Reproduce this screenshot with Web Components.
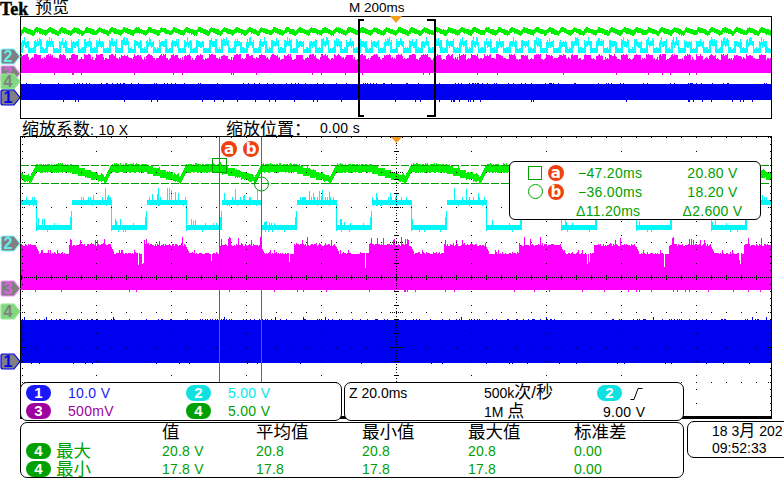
<!DOCTYPE html>
<html lang="zh">
<head>
<meta charset="utf-8">
<title>Tek</title>
<style>
  html, body { margin: 0; padding: 0; background: #fff; overflow: hidden; }
</style>
</head>
<body>
<scope-screen>
  <scope-top style="grid-area: 1 / 1 / 2 / -1"></scope-top>
  <scope-overview style="grid-area: 2 / 2 / 3 / 7"></scope-overview>
  <scope-zoombar style="grid-area: 3 / 2 / 4 / -1"></scope-zoombar>
  <scope-main style="grid-area: 4 / 2 / 6 / 7">
    <scope-badge style="left:201px;top:5px">a</scope-badge>
    <scope-badge style="left:223px;top:5px">b</scope-badge>
    <cursor-readout></cursor-readout>
  </scope-main>
  <scope-rail style="grid-area: 1 / 1 / -1 / 2">
    <scope-tag ch="2" style="top:48px"></scope-tag>
    <scope-tag ch="3" style="top:65px"></scope-tag>
    <scope-tag ch="4" style="top:73px"></scope-tag>
    <scope-tag ch="1" style="top:89px"></scope-tag>
    <scope-tag ch="2" style="top:235px"></scope-tag>
    <scope-tag ch="3" style="top:280px"></scope-tag>
    <scope-tag ch="4" style="top:303px"></scope-tag>
    <scope-tag ch="1" style="top:353px"></scope-tag>
  </scope-rail>
  <channel-box style="grid-area: 5 / 2 / 7 / 3">
    <scope-pill ch="1">1</scope-pill><scope-value ch="1">10.0 V</scope-value>
    <scope-pill ch="2">2</scope-pill><scope-value ch="2">5.00 V</scope-value>
    <scope-pill ch="3">3</scope-pill><scope-value ch="3">500mV</scope-value>
    <scope-pill ch="4">4</scope-pill><scope-value ch="4">5.00 V</scope-value>
  </channel-box>
  <acq-box style="grid-area: 5 / 4 / 7 / 5"></acq-box>
  <meas-box style="grid-area: 8 / 2 / 10 / 5"></meas-box>
  <date-box style="grid-area: 7 / 6 / 9 / -1"></date-box>
</scope-screen>

<script>
const SANS = '"Liberation Sans", "Noto Sans CJK SC", sans-serif';
const GREEN = '#00a000';

// small repeatable random so the noise is the same on every load
function makeRand(seed) {
  let s = seed;
  return () => {
    s = (s * 1664525 + 1013904223) % 4294967296;
    return s / 4294967296;
  };
}

// one vertical run per pixel column, fn(x) gives [top, bottom]
function columns(x0, x1, fn) {
  let d = '';
  for (let x = x0; x < x1; x++) {
    const [a, b] = fn(x);
    d += `M${x + 0.5} ${Math.round(a)}V${Math.round(b)}`;
  }
  return d;
}

function trace(d, color) {
  return `<path d="${d}" stroke="${color}" fill="none" stroke-width="1" shape-rendering="crispEdges"/>`;
}

class ScopeScreen extends HTMLElement {
  constructor() {
    super();
    this.attachShadow({mode: 'open'}).innerHTML = `
      <style>
        :host {
          display: grid;
          width: 784px;
          height: 480px;
          overflow: hidden;
          background: #fff;
          color: #000;
          font-family: ${SANS};
          grid-template-columns: 20px 322px 2px 340px 3px 85px 12px;
          grid-template-rows: 16px 103px 17px 246px 37px 2px 1px 36px 20px 2px;
        }
      </style>
      <slot></slot>`;
  }
}

class ScopeTop extends HTMLElement {
  constructor() {
    super();
    this.attachShadow({mode: 'open'}).innerHTML = `
      <style>
        :host { display: block; position: relative; height: 16px; line-height: 16px; white-space: nowrap; }
        .row { display: flex; align-items: center; height: 16px; }
        .tek { font: bold 18px/16px "Liberation Serif", serif; width: 35px; padding-top: 1px; -webkit-text-stroke: 0.4px #000; }
        .title { font-size: 17px; width: 314px; }
        .scale { font-size: 13.5px; }
      </style>
      <div class="row">
        <span class="tek">Tek</span>
        <span class="title">预览</span>
        <span class="scale">M 200ms</span>
      </div>`;
  }
}

class ScopeZoombar extends HTMLElement {
  constructor() {
    super();
    this.attachShadow({mode: 'open'}).innerHTML = `
      <style>
        :host { display: flex; align-items: center; height: 17px; padding-left: 2px; white-space: nowrap; font-size: 17px; }
        .factor { width: 204px; }
        .pos { width: 94px; }
        small { font-size: 14px; letter-spacing: 0.3px; }
      </style>
      <span class="factor">缩放系数<small>: 10 X</small></span>
      <span class="pos">缩放位置：</span>
      <small>0.00 s</small>`;
  }
}

class ScopeOverview extends HTMLElement {
  constructor() {
    super();
    const rand = makeRand(7);
    const period = 12.5;
    const green = columns(21, 771, x => {
      const p = ((x - 21) % period) / period;
      const c = p < 0.2 ? 32 - p * 15 : 29 + (p - 0.2) * 5;
      return [c - 2.5 + rand() * 0.8, c + 2.5 + rand() * 1.2];
    });
    const cyan = columns(21, 771, x => {
      const p = ((x - 21) % period) / period;
      const n = rand();
      if (p < 0.16 || (p > 0.5 && p < 0.64)) return [39 + n * 3, 53];
      if (p < 0.5) return [n < 0.3 ? 37 + n * 6 : 40 + n * 2, 45 + n * 3];
      return [47 + n * 2, 53];
    });
    const magenta = columns(21, 771, x => {
      const p = ((x - 21) % period) / period;
      const n = rand();
      const top = p < 0.55 ? 54 + n * 2 : 57 + n * 3;
      return [top, n < 0.03 ? 75 : 73];
    });
    const blue = columns(21, 771, x => {
      const n = rand();
      const m = rand();
      return [n < 0.15 ? 83 : 84, m < 0.07 ? 102 : 100];
    });
    this.attachShadow({mode: 'open'}).innerHTML = `
      <style>
        :host { display: block; height: 103px; position: relative; }
        svg { display: block; overflow: visible; }
      </style>
      <svg width="752" height="103" viewBox="20 16 752 103">
        <rect x="20.5" y="16.5" width="751" height="102" fill="#fff" stroke="#000"/>
        ${trace(green, '#00f000')}
        ${trace(cyan, '#00ffff')}
        ${trace(magenta, '#ff00ff')}
        ${trace(blue, '#0000f0')}
        <path d="M364 20H359V116H364M427 20H435V116H427" fill="none" stroke="#000" stroke-width="2" shape-rendering="crispEdges"/>
        <path d="M390 16H402L396 23Z" fill="#f59a23"/>
      </svg>`;
  }
}

class ScopeMain extends HTMLElement {
  constructor() {
    super();
    this.attachShadow({mode: 'open'}).innerHTML = `
      <style>
        :host { display: block; position: relative; height: 283px; }
        svg { display: block; position: absolute; left: 0; top: 0; }
      </style>
      <svg width="752" height="283" viewBox="20 136 752 283">${this.drawing()}</svg>
      <slot></slot>`;
  }

  drawing() {
    const rand = makeRand(21);
    const period = 75;
    const phase = (x, start) => ((x - start) % period + period) % period;

    const green = columns(21, 771, x => {
      const p = phase(x, 30);
      let c, half;
      if (p < 6) { c = 180 - p * 2; half = 3.5; }
      else if (p < 40) { c = 168.5; half = 3.6; }
      else { c = 168.5 + (p - 40) / 35 * 11; half = 3.8 - (p - 40) / 35 * 0.8; }
      c = p >= 40 ? Math.round(c / 2) * 2 : c;
      const n = rand();
      return [c - half - (n < 0.1 ? 2 : n * 0.8), c + half + rand() * 0.8];
    });

    const cyan = columns(21, 771, x => {
      const p = phase(x, 36);
      const n = rand();
      if (p < 1) return [200, 231];
      if (p < 34) {
        const spike = p < 10 && n < 0.2 ? 3 + n * 18 : n < 0.06 ? 2 : 0;
        return [225 - spike, 230 + (rand() < 0.1 ? 2 : 0)];
      }
      if (p < 36) return [205 + (36 - p) * 6, 230];
      let top = 200;
      if (n < 0.14) top = 187 + n * 70;
      else if (n < 0.3) top = 197;
      return [top, 205 + (rand() < 0.1 ? 1 : 0)];
    });

    const magenta = columns(21, 771, x => {
      const p = phase(x, 36);
      const n = rand();
      const m = rand();
      let top;
      if (p >= 33) top = n < 0.12 ? 237 + n * 30 : 243 + n * 3;
      else if (p < 3) top = 247 + p * 2;
      else if (p > 24 && n < 0.15) top = 258 + n * 70;
      else top = n < 0.1 ? 250 : 252 + n * 2.5;
      return [top, m < 0.04 ? 292 : 290];
    });

    const blue = columns(21, 771, x => {
      const n = rand();
      const m = rand();
      return [n < 0.02 ? 317 : n < 0.2 ? 319 : 320, m < 0.03 ? 364 : 363];
    });

    // graticule
    let dots = '';
    const dot = (x, y) => { dots += `M${x} ${y}h1v1h-1z`; };
    for (let k = 0; k <= 10; k++) {
      const x = 21 + k * 75;
      if (k === 0 || k === 5 || k === 10) continue;
      for (let y = 137; y < 416; y += 14) dot(x, y);
    }
    for (let r = 0; r <= 8; r++) {
      const y = 137 + r * 35;
      if (r === 4) continue;
      for (let x = 36; x < 770; x += 15) dot(x, y);
      for (let x = 390; x <= 403; x += 2) dot(x, y);
      dot(24, y);
      dot(768, y);
    }
    for (let y = 137; y < 416; y += 7) { dot(22, y); dot(770, y); }
    for (let x = 22; x < 770; x += 2) dot(x, 277);
    for (let x = 21; x < 771; x += 15) {
      for (let y = 275; y <= 279; y++) dot(x, y);
    }
    for (let i = 0; i < 100; i++) dot(396, Math.round(137 + i * 2.8));
    for (let y = 137; y < 416; y += 14) {
      dot(394, y); dot(395, y); dot(397, y); dot(398, y);
    }

    return `
      <rect x="20" y="136" width="752" height="283" fill="#fff"/>
      ${trace(green, '#00f000')}
      ${trace(cyan, '#00f8f8')}
      ${trace(magenta, '#ff00ff')}
      ${trace(blue, '#0000f0')}
      <path d="${dots}" fill="#000" shape-rendering="crispEdges"/>
      <path d="M21 165.5H771M21 183.5H771" stroke="#00a000" stroke-dasharray="8 2" fill="none" shape-rendering="crispEdges"/>
      <path d="M219.5 136V416M261.5 136V416" stroke="#1a9a1a" fill="none" shape-rendering="crispEdges"/>
      <rect x="212.5" y="158.5" width="14" height="14" fill="none" stroke="#00a000"/>
      <circle cx="261.5" cy="184" r="7" fill="none" stroke="#00a000"/>
      <path d="M20.5 136V419M20 136.5H772M771.5 136V419" stroke="#000" fill="none" shape-rendering="crispEdges"/>
      <rect x="20" y="416" width="752" height="3" fill="#000"/>
      <path d="M391 137H402L396.5 143Z" fill="#f59a23"/>`;
  }
}

class ScopeRail extends HTMLElement {
  constructor() {
    super();
    this.attachShadow({mode: 'open'}).innerHTML = `
      <style>:host { display: block; position: relative; width: 20px; z-index: 2; }</style>
      <slot></slot>`;
  }
}

const TAG_COLORS = {
  1: {fill: '#808080', line: '#0000f0', text: '#0000f0'},
  2: {fill: '#808080', line: '#80ffff', text: '#60f0f0'},
  3: {fill: '#808080', line: '#ff90ff', text: '#e060e0'},
  4: {fill: '#80d880', line: '#90e890', text: '#808080'},
};

class ScopeTag extends HTMLElement {
  constructor() {
    super();
    const ch = this.getAttribute('ch');
    const c = TAG_COLORS[ch];
    this.attachShadow({mode: 'open'}).innerHTML = `
      <style>
        :host { display: block; position: absolute; left: 0; width: 21px; height: 17px; }
        svg { display: block; }
        span {
          position: absolute; left: 1px; top: 0; width: 14px; height: 17px;
          text-align: center; font: bold 16px/17px "Liberation Sans", sans-serif; color: ${c.text};
        }
      </style>
      <svg width="21" height="17"><polygon points="2,1 14,1 20,8.5 14,16 2,16 1,15 1,2" fill="${c.fill}" stroke="${c.line}" stroke-width="1.2"/></svg>
      <span>${ch}</span>`;
  }
}

class ScopeBadge extends HTMLElement {
  constructor() {
    super();
    this.attachShadow({mode: 'open'}).innerHTML = `
      <style>
        :host {
          display: flex; align-items: center; justify-content: center;
          position: absolute; width: 16px; height: 16px; border-radius: 50%;
          background: #f04010; color: #fff;
          font: bold 15px/16px "DejaVu Sans", sans-serif;
        }
        :host([inline]) { position: static; }
      </style>
      <slot></slot>`;
  }
}

const PILL_COLORS = {1: '#1818f8', 2: '#10e0e0', 3: '#a000a0', 4: '#00a000'};
const VALUE_COLORS = {1: '#1818f8', 2: '#00e8e8', 3: '#a000a0', 4: '#00a000'};

class ScopePill extends HTMLElement {
  constructor() {
    super();
    const ch = this.getAttribute('ch');
    this.attachShadow({mode: 'open'}).innerHTML = `
      <style>
        :host {
          display: flex; align-items: center; justify-content: center;
          width: 25px; height: 16px; border-radius: 8px;
          background: ${PILL_COLORS[ch]}; color: #fff;
          font: bold 15px/16px "Liberation Sans", sans-serif;
        }
      </style>
      <slot></slot>`;
  }
}

class ScopeValue extends HTMLElement {
  constructor() {
    super();
    const ch = this.getAttribute('ch');
    this.attachShadow({mode: 'open'}).innerHTML = `
      <style>
        :host { display: block; color: ${VALUE_COLORS[ch]}; font-size: 14px; line-height: 16px; letter-spacing: 0.3px; white-space: nowrap; }
      </style>
      <slot></slot>`;
  }
}

class CursorReadout extends HTMLElement {
  constructor() {
    super();
    this.attachShadow({mode: 'open'}).innerHTML = `
      <style>
        :host {
          display: grid; position: absolute; left: 489px; top: 25px;
          width: 252px; height: 59px; box-sizing: border-box;
          grid-template-columns: 14px 22px 113px 1fr;
          grid-auto-rows: 19px;
          align-items: center;
          padding: 1px 14px 0 18px;
          background: #fff; border: 1px solid #000; border-radius: 6px;
          color: ${GREEN}; font-size: 14px; letter-spacing: 0.3px; white-space: nowrap;
        }
        .sq { width: 14px; height: 14px; box-sizing: border-box; border: 1px solid ${GREEN}; }
        .ci { width: 15px; height: 15px; box-sizing: border-box; border: 1px solid ${GREEN}; border-radius: 50%; }
        .mark { display: flex; justify-content: center; width: 16px; margin-left: 6px; }
        .t { padding-left: 14px; }
        .d { padding-left: 12px; }
        .v { text-align: center; padding-left: 2px; }
      </style>
      <span class="sq"></span><span class="mark"><scope-badge inline>a</scope-badge></span><span class="t">−47.20ms</span><span class="v">20.80 V</span>
      <span class="ci"></span><span class="mark"><scope-badge inline>b</scope-badge></span><span class="t">−36.00ms</span><span class="v">18.20 V</span>
      <span></span><span></span><span class="d">Δ11.20ms</span><span class="v">Δ2.600 V</span>`;
  }
}

class ChannelBox extends HTMLElement {
  constructor() {
    super();
    this.attachShadow({mode: 'open'}).innerHTML = `
      <style>
        :host {
          display: grid; box-sizing: border-box; height: 39px; position: relative; z-index: 1;
          grid-template-columns: 25px 135px 25px 1fr;
          grid-auto-rows: 16px; row-gap: 2px; column-gap: 0;
          align-items: center;
          padding: 2px 5px 0 5px;
          background: #fff; border: 1px solid #000; border-radius: 7px;
        }
        ::slotted(scope-value) { padding-left: 17px; }
      </style>
      <slot></slot>`;
  }
}

class AcqBox extends HTMLElement {
  constructor() {
    super();
    this.attachShadow({mode: 'open'}).innerHTML = `
      <style>
        :host {
          display: grid; box-sizing: border-box; height: 39px; position: relative; z-index: 1;
          grid-template-columns: 135px 113px 1fr;
          grid-template-rows: 16px 18px;
          row-gap: 2px;
          align-items: center;
          padding: 2px 4px 0 4px;
          background: #fff; border: 1px solid #000; border-radius: 7px;
          font-size: 14px; line-height: 16px; white-space: nowrap;
        }
        .cjk { font-size: 17px; line-height: 0; }
        .trig { display: flex; align-items: center; gap: 8px; }
        .lvl { padding-left: 6px; letter-spacing: 0.3px; }
      </style>
      <span>Z 20.0ms</span>
      <span>500k<span class="cjk">次/秒</span></span>
      <span class="trig">
        <scope-pill ch="2">2</scope-pill>
        <svg width="13" height="13"><path d="M0.5 12.5H4L8 1.5H12.5" fill="none" stroke="#000"/></svg>
      </span>
      <span></span>
      <span>1M <span class="cjk">点</span></span>
      <span class="lvl">9.00 V</span>`;
  }
}

class MeasBox extends HTMLElement {
  constructor() {
    super();
    const rows = [
      ['最大', '20.8 V', '20.8', '20.8', '20.8', '0.00'],
      ['最小', '17.8 V', '17.8', '17.8', '17.8', '0.00'],
    ];
    const cells = rows.map(r => `
      <scope-pill ch="4">4</scope-pill>
      <span class="name">${r[0]}</span>
      ${r.slice(1).map(v => `<span class="val">${v}</span>`).join('')}`).join('');
    this.attachShadow({mode: 'open'}).innerHTML = `
      <style>
        :host {
          display: grid; box-sizing: border-box; height: 56px; position: relative; z-index: 1;
          grid-template-columns: 30px 106px 94px 106px 106px 106px 1fr;
          grid-template-rows: 17px 16px 16px;
          row-gap: 2px;
          align-items: center;
          padding: 1px 5px 0 5px;
          background: #fff; border: 1px solid #000; border-radius: 7px;
          white-space: nowrap;
        }
        .head { font-size: 17.5px; line-height: 17px; }
        .name { color: ${GREEN}; font-size: 17.5px; line-height: 16px; }
        .val { color: ${GREEN}; font-size: 14px; line-height: 16px; letter-spacing: 0.2px; }
      </style>
      <span></span><span></span>
      <span class="head">值</span>
      <span class="head">平均值</span>
      <span class="head">最小值</span>
      <span class="head">最大值</span>
      <span class="head">标准差</span>
      ${cells}`;
  }
}

class DateBox extends HTMLElement {
  constructor() {
    super();
    this.attachShadow({mode: 'open'}).innerHTML = `
      <style>
        :host {
          display: block; box-sizing: border-box; width: 120px; height: 37px; position: relative; z-index: 1;
          padding: 1px 0 0 24px;
          background: #fff; border: 1px solid #000; border-radius: 7px;
          font-size: 14px; line-height: 17px; white-space: nowrap;
        }
        div { height: 17px; }
        .cjk { font-size: 16px; line-height: 0; }
      </style>
      <div>18 3<span class="cjk">月</span> 202</div>
      <div>09:52:33</div>`;
  }
}

customElements.define('scope-screen', ScopeScreen);
customElements.define('scope-top', ScopeTop);
customElements.define('scope-zoombar', ScopeZoombar);
customElements.define('scope-overview', ScopeOverview);
customElements.define('scope-main', ScopeMain);
customElements.define('scope-rail', ScopeRail);
customElements.define('scope-tag', ScopeTag);
customElements.define('scope-badge', ScopeBadge);
customElements.define('scope-pill', ScopePill);
customElements.define('scope-value', ScopeValue);
customElements.define('cursor-readout', CursorReadout);
customElements.define('channel-box', ChannelBox);
customElements.define('acq-box', AcqBox);
customElements.define('meas-box', MeasBox);
customElements.define('date-box', DateBox);
</script>
</body>
</html>
